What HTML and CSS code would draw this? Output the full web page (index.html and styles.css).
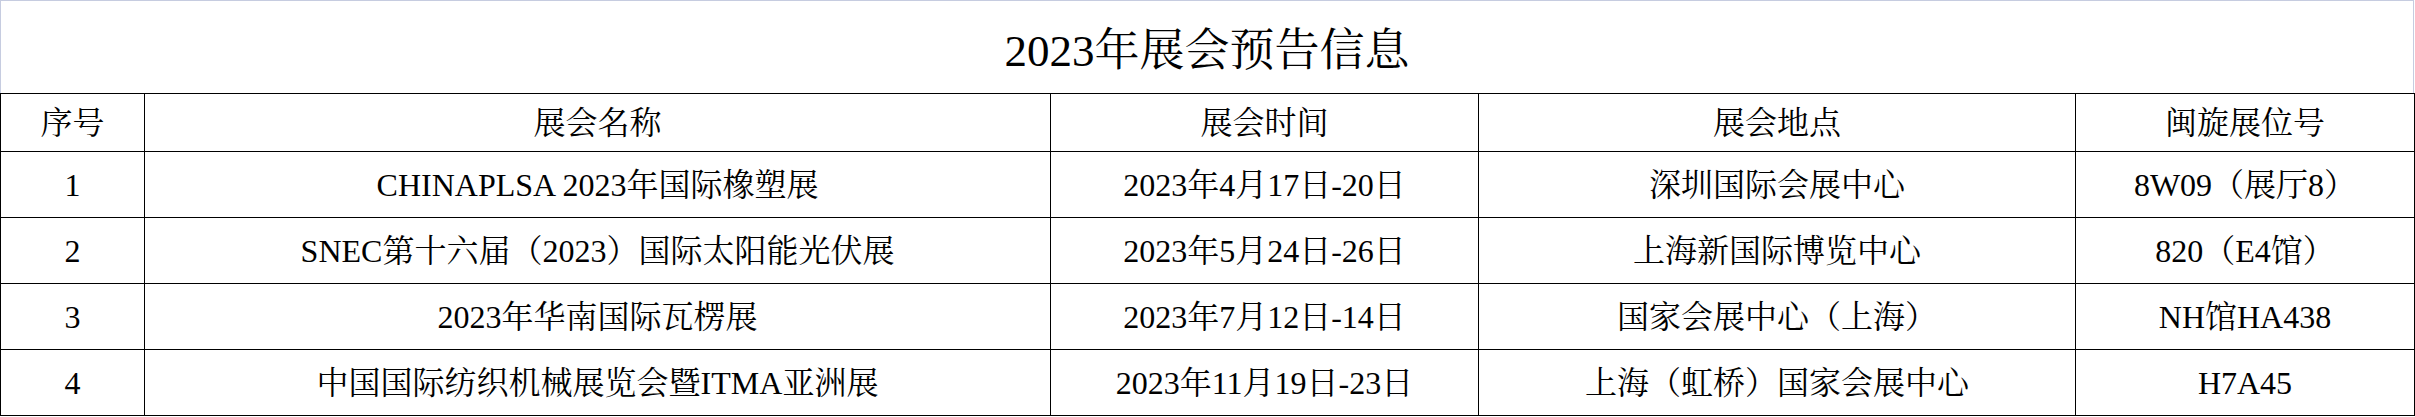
FILE: index.html
```html
<!DOCTYPE html>
<html lang="zh-CN">
<head>
<meta charset="utf-8">
<title>2023年展会预告信息</title>
<link rel="stylesheet" href="styles.css">
</head>
<body>
<div class="sheet">
  <div class="title">2023年展会预告信息</div>
  <table class="grid">
    <colgroup>
      <col class="c-no">
      <col class="c-name">
      <col class="c-time">
      <col class="c-place">
      <col class="c-booth">
    </colgroup>
    <thead>
      <tr class="head">
        <th>序号</th>
        <th>展会名称</th>
        <th>展会时间</th>
        <th>展会地点</th>
        <th>闽旋展位号</th>
      </tr>
    </thead>
    <tbody>
      <tr>
        <td>1</td>
        <td>CHINAPLSA 2023年国际橡塑展</td>
        <td>2023年4月17日-20日</td>
        <td>深圳国际会展中心</td>
        <td>8W09（展厅8）</td>
      </tr>
      <tr>
        <td>2</td>
        <td>SNEC第十六届（2023）国际太阳能光伏展</td>
        <td>2023年5月24日-26日</td>
        <td>上海新国际博览中心</td>
        <td>820（E4馆）</td>
      </tr>
      <tr>
        <td>3</td>
        <td>2023年华南国际瓦楞展</td>
        <td>2023年7月12日-14日</td>
        <td>国家会展中心（上海）</td>
        <td>NH馆HA438</td>
      </tr>
      <tr>
        <td>4</td>
        <td>中国国际纺织机械展览会暨ITMA亚洲展</td>
        <td>2023年11月19日-23日</td>
        <td>上海（虹桥）国家会展中心</td>
        <td>H7A45</td>
      </tr>
    </tbody>
  </table>
</div>
</body>
</html>
```

FILE: styles.css
```css
html, body {
  margin: 0;
  padding: 0;
  background: #ffffff;
}

body {
  font-family: "Liberation Serif", "Noto Serif CJK SC", "Noto Sans CJK SC", serif;
  color: #000000;
}

.sheet {
  width: 2414px;
}

.title {
  box-sizing: border-box;
  height: 93px;
  border: 1px solid #c6cce0;
  border-bottom: none;
  display: flex;
  align-items: center;
  justify-content: center;
  padding-top: 8px;
  font-size: 45px;
  line-height: 1;
}

.grid {
  width: 2414px;
  border-collapse: collapse;
  table-layout: fixed;
}

.c-no { width: 144px; }
.c-name { width: 906px; }
.c-time { width: 428px; }
.c-place { width: 597px; }
.c-booth { width: 339px; }

.grid th,
.grid td {
  border: 1px solid #000000;
  padding: 0;
  text-align: center;
  vertical-align: middle;
  font-size: 32px;
  font-weight: normal;
  line-height: 1;
  white-space: nowrap;
}

.grid tr.head {
  height: 58px;
}

.grid tbody tr {
  height: 66px;
}
```
